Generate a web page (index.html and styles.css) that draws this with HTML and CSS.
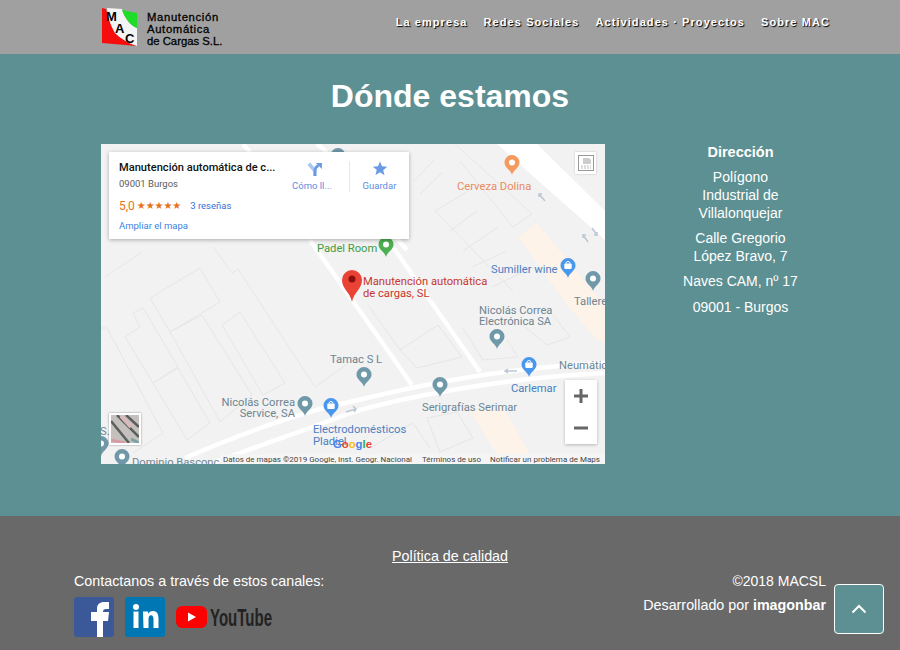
FILE: index.html
```html
<!DOCTYPE html>
<html lang="es">
<head>
<meta charset="utf-8">
<title>Dónde estamos</title>
<link rel="stylesheet" href="styles.css">
</head>
<body>
<header class="topbar">
  <a class="brand" href="#">
    <svg class="brand-mark" viewBox="0 0 36 38" width="36" height="38">
      <path d="M0 0L4 1C6 10 9 18 13 25C18 30 26 35 35 38L0 35Z" fill="#f60d0d"/>
      <path d="M5 0L20 1C23 11 29 18 35 20L35 38C26 35 18 30 13 25C9 18 6 10 5 0Z" fill="#f4f4f4"/>
      <path d="M20 2L35 5L35 20C29 18 23 11 20 2Z" fill="#1fdc28"/>
      <text x="4" y="13" class="mark-letter">M</text>
      <text x="13" y="25" class="mark-letter">A</text>
      <text x="23" y="35" class="mark-letter">C</text>
    </svg>
    <span class="brand-name"><span class="brand-wide">Manutención</span><span class="brand-wide">Automática</span><span class="brand-line">de Cargas S.L.</span></span>
  </a>
  <nav class="nav">
    <a href="#">La empresa</a>
    <a href="#">Redes Sociales</a>
    <a href="#">Actividades · Proyectos</a>
    <a href="#">Sobre MAC</a>
  </nav>
</header>

<main class="main">
  <h1 class="title">Dónde estamos</h1>
  <div class="content">
    <div class="map">
      <svg class="map-art" viewBox="101 144 504 320" width="504" height="320">
        <defs>
          <g id="pin"><path d="M0 10C-1 5-7.500 3-7.500-2.500A7.500 7.500 0 1 1 7.500-2.500C7.500 3 1 5 0 10Z"/><circle cx="0" cy="-2.500" r="3" fill="#fff"/></g>
          <g id="shop"><path d="M0 10C-1 5-7.500 3-7.500-2.500A7.500 7.500 0 1 1 7.500-2.500C7.500 3 1 5 0 10Z"/><rect x="-3.700" y="-4.500" width="7.400" height="5.500" rx="1" fill="#fff"/><path d="M-2-4.500a2 2 0 0 1 4 0" fill="none" stroke="#fff"/></g>
        </defs>
        <rect x="101" y="144" width="504" height="320" fill="#f2f2f2"/>
        <g class="blocks">
          <path d="M142 252L105 277"/>
          <path d="M150 298L200 268L220 302L170 332Z"/>
          <path d="M133 313L143 308L178 367L153 383L125 337L140 327Z"/>
          <path d="M170 332L202 315L252 395L220 422Z"/>
          <path d="M153 383L178 368L210 423L187 440Z"/>
          <path d="M222 325L240 312L285 383L263 395Z"/>
          <path d="M213 247L232 273L238 269L315 387L357 357"/>
          <path d="M100 328L107 328L163 433L133 453"/>
          <path d="M413 182L435 159M420 194L443 172M435 211L475 187"/>
          <path d="M455 144L532 214L513 227L460 161"/>
          <path d="M435 211L513 291M450 231L477 211M463 251L498 227M472 267L507 251M492 287L523 272"/>
          <path d="M368 305L400 350L438 325M400 350L417 368L462 357L438 325"/>
          <path d="M463 328L483 360L518 357L507 340"/>
          <path d="M523 325L547 345L570 337L553 315"/>
          <path d="M427 418L457 412L473 438L440 452Z"/>
          <path d="M370 448L413 423L430 448"/>
        </g>
        <path class="tint" d="M518 237L537 223L605 305L605 341L598 341L567 305Z"/>
        <path class="tint" d="M470 412L502 405L530 454L497 454Z"/>
        <path class="road-fill" d="M497 144L537 144L605 211L605 240Z"/>
        <g class="roads">
          <path d="M243 144L250 152M327 152L317 144"/>
          <path d="M310 240L412 385"/>
          <path d="M393 247L480 372"/>
          <path d="M397 239L407 250"/>
          <path d="M185 458C250 430 310 410 350 402C420 385 500 368 605 363"/>
          <path d="M205 466C260 445 320 425 350 413C400 398 500 378 605 373"/>
        </g>
        <g class="arrows">
          <path d="M539 194l6 7M542 194h-3v3"/>
          <path d="M583 235l5 7M586 235h-3v3"/>
          <path d="M597 235l-5-7M594 235h3v-3"/>
          <path d="M505 371h12M508 369l-3 2 3 2"/>
          <path d="M346 412l10-3M353 406l3 3-2 3"/>
        </g>
        <g class="pin-teal">
          <use href="#pin" x="338" y="158"/>
          <use href="#pin" x="364" y="377"/>
          <use href="#pin" x="440" y="387"/>
          <use href="#pin" x="305" y="406"/>
          <use href="#pin" x="497" y="339"/>
          <use href="#pin" x="593" y="281"/>
          <use href="#pin" x="101" y="446"/>
          <use href="#pin" x="122" y="459"/>
        </g>
        <g class="pin-blue">
          <use href="#shop" x="568" y="268"/>
          <use href="#shop" x="529" y="367"/>
          <use href="#shop" x="331" y="408"/>
        </g>
        <use href="#pin" x="512" y="165" class="pin-orange"/>
        <use href="#pin" x="386" y="247" class="pin-green"/>
        <path class="pin-red" d="M352 302C350 292 342 289 342 280A10 10 0 1 1 362 280C362 289 354 292 352 302Z"/>
        <circle cx="352" cy="279" r="3.500" fill="#8a1010"/>
        <g class="lbl">
          <text x="457" y="190" class="l-orange">Cerveza Dolina</text>
          <text x="317" y="252" class="l-green">Padel Room</text>
          <text x="363" y="285" class="l-red">Manutención automática</text>
          <text x="363" y="297" class="l-red">de cargas, SL</text>
          <text x="491" y="273" class="l-blue">Sumiller wine</text>
          <text x="574" y="305">Tallere</text>
          <text x="479" y="314">Nicolás Correa</text>
          <text x="479" y="325">Electrónica SA</text>
          <text x="330" y="363">Tamac S L</text>
          <text x="559" y="369">Neumátic</text>
          <text x="511" y="392" class="l-blue">Carlemar</text>
          <text x="422" y="411">Serigrafías Serimar</text>
          <text x="295" y="406" text-anchor="end">Nicolás Correa</text>
          <text x="295" y="417" text-anchor="end">Service, SA</text>
          <text x="313" y="433" class="l-blue">Electrodomésticos</text>
          <text x="313" y="445" class="l-blue">Pladiel</text>
          <text x="100" y="435">S.</text>
          <text x="132" y="466">Dominio Basconc</text>
        </g>
        <text x="333" y="448" class="g-logo"><tspan fill="#4285f4">G</tspan><tspan fill="#ea4335">o</tspan><tspan fill="#fbbc05">o</tspan><tspan fill="#4285f4">g</tspan><tspan fill="#34a853">l</tspan><tspan fill="#ea4335">e</tspan></text>
        <rect x="220" y="454" width="385" height="10" class="attr-bg"/>
        <g class="attr">
          <text x="223" y="462" textLength="189">Datos de mapas ©2019 Google, Inst. Geogr. Nacional</text>
          <text x="422" y="462" textLength="59">Términos de uso</text>
          <text x="490" y="462" textLength="110">Notificar un problema de Maps</text>
        </g>
      </svg>

      <div class="place-card">
        <div class="place-info">
          <div class="place-name">Manutención automática de c...</div>
          <div class="place-addr">09001 Burgos</div>
          <div class="place-rating"><span class="score">5,0</span><span class="stars">★★★★★</span><a class="reviews" href="#">3 reseñas</a></div>
          <a class="place-more" href="#">Ampliar el mapa</a>
        </div>
        <div class="place-actions">
          <div class="action action-route">
            <svg class="route-icon" width="17" height="16" viewBox="0 0 17 16"><path d="M9 16V10L2 2" fill="none" stroke="#a9c7f2" stroke-width="4"/><path d="M9 16V10C9 7 11 5 13 4" fill="none" stroke="#6b9ae4" stroke-width="3"/><path d="M10 1h7v7Z" fill="#6b9ae4"/></svg>
            <span>Cómo ll...</span>
          </div>
          <div class="action action-save">
            <svg width="18" height="18" viewBox="0 0 18 18"><path d="M9 .5l2.400 5.900 6.300.5-4.800 4.100 1.500 6.200L9 13.400l-5.400 3.300 1.500-6.200L.3 6.900l6.300-.5Z" fill="#6b9ae4"/></svg>
            <span>Guardar</span>
          </div>
        </div>
      </div>

      <div class="expand-btn">
        <svg width="16" height="16" viewBox="0 0 16 16"><rect x=".5" y=".5" width="15" height="15" fill="none" stroke="#999"/><path d="M5 3h6l2 2v4H5Z" fill="#ccc"/><path d="M3 11h10M3 13h10" stroke="#bbb" stroke-dasharray="2 1"/></svg>
      </div>
      <div class="sat-thumb">
        <svg width="28" height="28" viewBox="0 0 28 28"><rect width="28" height="28" fill="#c4c0be"/><path d="M0 6L18 28M6 0L28 22M15 0L28 12" stroke="#5d5f5f" stroke-width="2.500"/><path d="M10 1L20 12" stroke="#dcb9bb" stroke-width="4"/><path d="M0 25L14 28" stroke="#d59da3" stroke-width="3"/><path d="M20 24L28 28" stroke="#7aa3a0" stroke-width="3"/></svg>
      </div>
      <div class="zoom-ctl">
        <svg width="14" height="14" viewBox="0 0 14 14"><path d="M0 7h14M7 0v14" stroke="#666" stroke-width="3"/></svg>
        <svg width="14" height="14" viewBox="0 0 14 14"><path d="M0 7h14" stroke="#666" stroke-width="3"/></svg>
      </div>
    </div>

    <address class="address">
      <p class="address-head">Dirección</p>
      <p>Polígono<br>Industrial de<br>Villalonquejar</p>
      <p>Calle Gregorio<br>López Bravo, 7</p>
      <p>Naves CAM, nº 17</p>
      <p>09001 - Burgos</p>
    </address>
  </div>
</main>

<footer class="footer">
  <a class="quality" href="#">Política de calidad</a>
  <div class="footer-row">
    <div class="contact">
      <p>Contactanos a través de estos canales:</p>
      <div class="socials">
        <svg width="40" height="40" viewBox="0 0 40 40"><rect width="40" height="40" rx="3" fill="#3b5998"/><path d="M23 40V24h-6v-9h6v-3C23 7 26 5 30 5h5v7h-3c-2 0-3 .8-3 3h6l-1 9h-5v16Z" fill="#fff"/></svg>
        <svg width="40" height="40" viewBox="0 0 40 40"><rect width="40" height="40" rx="3" fill="#0077b5"/><circle cx="11" cy="10" r="3" fill="#fff"/><path d="M8.500 14.500h5V31h-5ZM18 14.500h5v2.300c1-1.600 2.500-2.800 5-2.800 4 0 5.500 3 5.500 7.500V31h-5v-8.500c0-2.500-.6-4.200-2.500-4.200-2 0-2.500 1.700-2.500 4.200V31h-5Z" fill="#fff"/></svg>
        <svg class="yt" width="97" height="24" viewBox="0 0 97 24"><rect x="0" y="1" width="31" height="22" rx="6" fill="#f00"/><path d="M12 7.500v9l8-4.500Z" fill="#fff"/><text x="34" y="21" class="yt-word" textLength="62" lengthAdjust="spacingAndGlyphs">YouTube</text></svg>
      </div>
    </div>
    <div class="credits">
      <p class="copyright">©2018 MACSL</p>
      <p>Desarrollado por <b>imagonbar</b></p>
    </div>
  </div>
  <a class="to-top" href="#" aria-label="Subir">
    <svg width="16" height="10" viewBox="0 0 16 10"><path d="M1.500 8.500L8 2l6.500 6.500" fill="none" stroke="#fff" stroke-width="2"/></svg>
  </a>
</footer>
</body>
</html>
```
FILE: styles.css
```css
* { box-sizing: border-box; }
html, body { margin: 0; padding: 0; }
body {
  width: 900px;
  height: 650px;
  overflow: hidden;
  font-family: "Liberation Sans", Arial, sans-serif;
  color: #fff;
  background: #5d9092;
  position: relative;
}
a { color: inherit; text-decoration: none; }
p { margin: 0; }

.topbar {
  height: 54px;
  background: #a0a0a0;
  display: flex;
  align-items: center;
  justify-content: space-between;
  padding: 0 70px 0 102px;
}
.brand { display: flex; align-items: center; gap: 9px; color: #000; }
.brand-mark { display: block; }
.mark-letter { font: bold 13px "Liberation Sans", sans-serif; fill: #000; }
.brand-name { font-size: 11.300px; line-height: 12px; padding-top: 3px; -webkit-text-stroke: .3px #000; }
.brand-wide, .brand-line { display: block; }
.brand-wide { letter-spacing: .65px; }
.nav { display: flex; gap: 16px; margin-top: -11px; }
.nav a {
  font-size: 11px;
  font-weight: 700;
  letter-spacing: 1.080px;
  color: #fff;
  text-shadow: 1px 1px 1px #000;
}

.main { height: 462px; padding-top: 23px; }
.title {
  margin: 0;
  font-size: 32px;
  line-height: 38px;
  font-weight: 700;
  text-align: center;
}
.content {
  display: flex;
  margin-top: 29px;
  padding-left: 101px;
}
.map { position: relative; width: 504px; height: 320px; overflow: hidden; flex: none; }
.map-art { display: block; }
.blocks path { fill: none; stroke: #e6e6e6; stroke-width: 1; }
.tint { fill: #fdf3e8; }
.road-fill { fill: #fff; }
.roads path { fill: none; stroke: #fff; stroke-width: 4.500; }
.arrows path { fill: none; stroke: #bcc6d6; stroke-width: 1.500; }
.pin-teal { fill: #6f98a8; }
.pin-blue { fill: #4a97ee; }
.pin-orange { fill: #f59a5e; }
.pin-green { fill: #4caf50; }
.pin-red { fill: #ea4335; }
.lbl text { font: 400 11.200px Roboto, sans-serif; fill: #6e8592; }
.lbl .l-orange { fill: #e88c62; }
.lbl .l-green { fill: #3f9c44; }
.lbl .l-red { fill: #c8372c; }
.lbl .l-blue { fill: #4a7fc4; }
.g-logo { font: 700 11.300px "Liberation Sans", sans-serif; }
.attr-bg { fill: #f5f5f5; fill-opacity: .8; }
.attr text { font: 400 8px Roboto, sans-serif; fill: #444; }

.place-card {
  position: absolute;
  left: 8px;
  top: 8px;
  width: 300px;
  height: 87px;
  background: #fff;
  box-shadow: 0 1px 4px rgba(0, 0, 0, .3);
  display: flex;
  justify-content: space-between;
  padding: 9px 0 0 10px;
  font-family: Roboto, sans-serif;
}
.place-name { font-size: 11.100px; font-weight: 500; line-height: 13px; color: #111; white-space: nowrap; }
.place-addr { font-size: 9.500px; line-height: 12px; color: #5b5b5b; margin-top: 4px; }
.place-rating { display: flex; align-items: center; font-size: 12px; line-height: 14px; margin-top: 9px; }
.score { color: #e7711b; }
.stars { color: #e7711b; font-size: 10px; letter-spacing: -.1px; margin-left: 2px; font-family: "DejaVu Sans", sans-serif; }
.reviews { color: #3a6fd8; font-size: 9.500px; margin-left: 9px; }
.place-more { display: block; color: #3a84df; font-size: 9.500px; line-height: 12px; margin-top: 7px; }
.place-actions { display: flex; }
.action {
  width: 60px;
  display: flex;
  flex-direction: column;
  align-items: center;
  gap: 4px;
  font-size: 9.500px;
  line-height: 12px;
  color: #5f8be0;
  height: 31px;
}
.action-route { padding-right: 14px; padding-top: 1px; }
.route-icon { margin-left: 4px; }
.action-save { border-left: 1px solid #e6e6e6; }
.expand-btn {
  position: absolute;
  left: 474px;
  top: 8px;
  width: 21px;
  height: 22px;
  background: #fff;
  display: flex;
  align-items: center;
  justify-content: center;
  box-shadow: 0 0 2px rgba(0, 0, 0, .2);
}
.sat-thumb {
  position: absolute;
  left: 8px;
  top: 269px;
  width: 32px;
  height: 32px;
  border: 2px solid #fff;
  box-shadow: 0 0 2px rgba(0, 0, 0, .4);
}
.sat-thumb svg { display: block; }
.zoom-ctl {
  position: absolute;
  left: 464px;
  top: 236px;
  width: 32px;
  height: 64px;
  background: #fff;
  box-shadow: 0 1px 3px rgba(0, 0, 0, .25);
  display: flex;
  flex-direction: column;
  align-items: center;
  justify-content: space-around;
}

.address {
  width: 135px;
  margin-left: 68px;
  font-style: normal;
  font-size: 14px;
  line-height: 18px;
  text-align: center;
  margin-top: -1px;
}
.address p { margin-bottom: 7.150px; }
.address .address-head { font-size: 14.500px; font-weight: 700; }

.footer {
  height: 134px;
  background: #696969;
  padding: 32px 74px 0;
  position: relative;
  font-size: 14.300px;
  line-height: 16px;
}
.quality { display: block; width: max-content; margin: 0 auto; text-decoration: underline; }
.footer-row { display: flex; justify-content: space-between; margin-top: 9px; }
.socials { display: flex; align-items: center; gap: 11px; margin-top: 8px; }
.socials svg { display: block; }
.yt-word { font: 700 23px "Liberation Sans", sans-serif; fill: #222; }
.credits { text-align: right; }
.credits p { margin-bottom: 8px; }
.credits .copyright { font-size: 14px; }
.to-top {
  position: absolute;
  left: 834px;
  top: 68px;
  width: 50px;
  height: 50px;
  background: #5d9092;
  border: 1px solid #fff;
  border-radius: 4px;
  display: flex;
  align-items: center;
  justify-content: center;
}
```
